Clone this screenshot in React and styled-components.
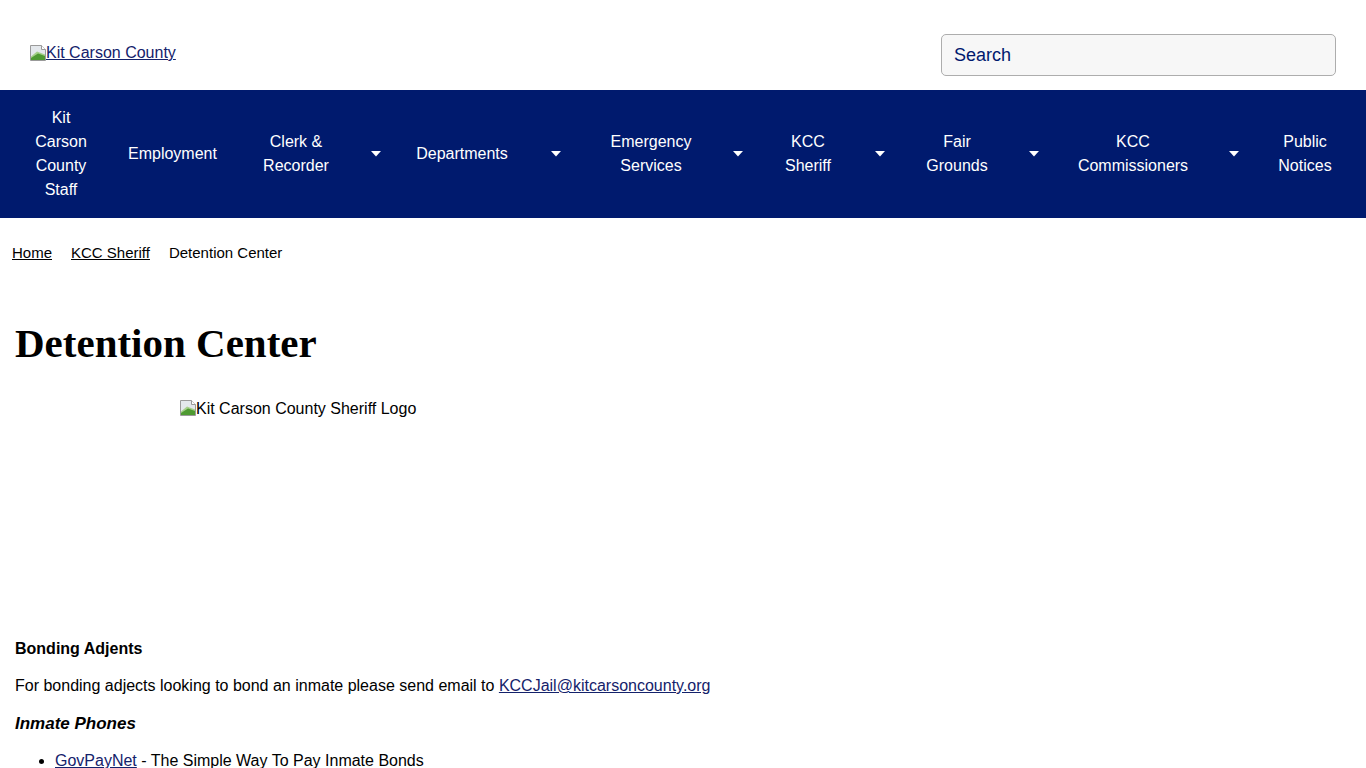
import React from 'react';
import styled, { createGlobalStyle } from 'styled-components';

const GlobalStyle = createGlobalStyle`
  body {
    margin: 0;
    background: #fff;
    color: #000;
    font-family: "Liberation Sans", Arial, sans-serif;
    font-size: 16px;
  }
`;

const navItems = [
  { label: 'Kit Carson County Staff', width: 94 },
  { label: 'Employment', width: 126 },
  { label: 'Clerk & Recorder', width: 124, caret: 36 },
  { label: 'Departments', width: 136, caret: 52 },
  { label: 'Emergency Services', width: 138, caret: 36 },
  { label: 'KCC Sheriff', width: 104, caret: 40 },
  { label: 'Fair Grounds', width: 114, caret: 40 },
  { label: 'KCC Commissioners', width: 158, caret: 44 },
  { label: 'Public Notices', width: 98 }
];

// browser's broken-image glyph
const BrokenIcon = () => (
  <svg width="16" height="16" viewBox="0 0 16 16">
    <path d="M0.5 0.5h11l4 4v11H0.5z" fill="#e4e8ec" stroke="#9a9a9a" />
    <path d="M11.5 0.5v4h4" fill="#fff" stroke="#9a9a9a" />
    <path d="M1 15V11.5L7 6.5L15 9.5V15z" fill="#a6d08a" />
    <path d="M1 15V13L8 8.5L15 11V15z" fill="#4f9a32" />
  </svg>
);

const Caret = () => (
  <svg width="10" height="6" viewBox="0 0 10 6">
    <polygon points="0,0 10,0 5,5.5" fill="#fff" />
  </svg>
);

const App = () => (
  <>
    <GlobalStyle />
    <Header>
      <LogoLink href="#">
        <BrokenIcon />
        <span>Kit Carson County</span>
      </LogoLink>
      <SearchBox>Search</SearchBox>
    </Header>

    <Nav>
      {navItems.map(item => (
        <NavItem key={item.label}>
          <NavLabel width={item.width}>{item.label}</NavLabel>
          {item.caret && (
            <CaretBox width={item.caret}>
              <Caret />
            </CaretBox>
          )}
        </NavItem>
      ))}
    </Nav>

    <Crumbs>
      <CrumbLink href="#">Home</CrumbLink>
      <CrumbLink href="#">KCC Sheriff</CrumbLink>
      <span>Detention Center</span>
    </Crumbs>

    <Main>
      <Title>Detention Center</Title>

      <ImageBox>
        <BrokenIcon />
        <span>Kit Carson County Sheriff Logo</span>
      </ImageBox>

      <SubHeading>Bonding Adjents</SubHeading>
      <Para>
        For bonding adjects looking to bond an inmate please send email to{' '}
        <TextLink href="#">KCCJail@kitcarsoncounty.org</TextLink>
      </Para>

      <SubHeading italic>Inmate Phones</SubHeading>
      <List>
        <li>
          <TextLink href="#">GovPayNet</TextLink> - The Simple Way To Pay Inmate Bonds
        </li>
      </List>
    </Main>
  </>
);

export default App;

const Header = styled.header`
  height: 90px;
  box-sizing: border-box;
  padding: 34px 30px 0;
  display: flex;
  justify-content: space-between;
  align-items: flex-start;
`;
const LogoLink = styled.a`
  margin-top: 10px;
  display: flex;
  align-items: flex-end;
  color: #14226b;
  font-size: 16px;
  line-height: 18px;
  svg {
    flex: none;
    margin-bottom: 1px;
  }
`;
const SearchBox = styled.div`
  width: 395px;
  height: 42px;
  box-sizing: border-box;
  border: 1px solid #adadad;
  border-radius: 5px;
  background: #f7f7f7;
  color: #00196e;
  font-size: 18px;
  display: flex;
  align-items: center;
  padding-left: 12px;
`;
const Nav = styled.nav`
  height: 128px;
  background: #001a6e;
  display: flex;
  align-items: center;
  padding: 0 12px 0 14px;
`;
const NavItem = styled.div`
  display: flex;
  align-items: center;
  height: 100%;
`;
const NavLabel = styled.a`
  width: ${props => props.width}px;
  box-sizing: border-box;
  padding: 0 20px;
  text-align: center;
  color: #fff;
  font-size: 16px;
  line-height: 24px;
`;
const CaretBox = styled.span`
  width: ${props => props.width}px;
  display: flex;
  justify-content: center;
  align-items: center;
`;
const Crumbs = styled.div`
  display: flex;
  gap: 19px;
  padding: 25px 12px 0;
  font-size: 15px;
  line-height: 20px;
`;
const CrumbLink = styled.a`
  color: #000;
`;
const Main = styled.main`
  padding: 0 15px;
`;
const Title = styled.h1`
  margin: 56px 0 0;
  font-family: "Liberation Serif", "Times New Roman", serif;
  font-weight: bold;
  font-size: 41px;
  line-height: 49px;
`;
const ImageBox = styled.div`
  margin: 31px 0 0 165px;
  height: 224px;
  display: flex;
  align-items: flex-start;
  font-size: 16px;
  line-height: 20px;
  svg {
    flex: none;
    margin-top: 1px;
  }
`;
const SubHeading = styled.h3`
  margin: ${props => (props.italic ? '18px' : '16px')} 0 0;
  font-size: ${props => (props.italic ? '17px' : '16px')};
  font-style: ${props => (props.italic ? 'italic' : 'normal')};
  font-weight: bold;
  line-height: 20px;
`;
const Para = styled.p`
  margin: 17px 0 0;
  line-height: 20px;
`;
const TextLink = styled.a`
  color: #14226b;
`;
const List = styled.ul`
  margin: 17px 0 0;
  padding-left: 40px;
  line-height: 20px;
`;
